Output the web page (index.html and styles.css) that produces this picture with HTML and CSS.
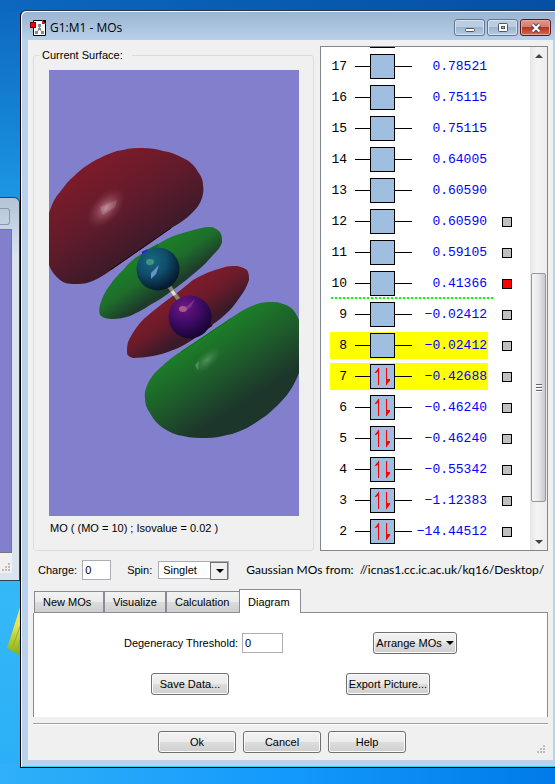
FILE: index.html
```html
<!DOCTYPE html>
<html lang="en">
<head>
    <meta charset="UTF-8">
    <meta name="viewport" content="width=device-width, initial-scale=1.0">
    <title>G1:M1 - MOs</title>
    <link rel="stylesheet" href="styles.css">
</head>
<body>
    <svg class="leaf" width="14" height="52" viewBox="0 0 14 52" aria-hidden="true">
        <defs>
            <linearGradient id="leafFill" x1="0" y1="0" x2="0" y2="1">
                <stop offset="0" stop-color="#f4e04a"/>
                <stop offset="0.4" stop-color="#e8e45a"/>
                <stop offset="1" stop-color="#7fae10"/>
            </linearGradient>
        </defs>
        <path d="M14 0L9 16L4 32L0 44L14 52Z" fill="url(#leafFill)"/>
        <path d="M14 20L6 42M14 32L10 48" stroke="#8cb51c" fill="none"/>
    </svg>

    <div class="back-window">
        <div class="back-button"></div>
        <div class="back-view"></div>
        <div class="back-status">
            <svg class="grip" width="8" height="8" viewBox="0 0 8 8"><path d="M6 0h2v2h-2zM3 3h2v2h-2zM6 3h2v2h-2zM0 6h2v2h-2zM3 6h2v2h-2zM6 6h2v2h-2z"/></svg>
        </div>
    </div>

    <main class="window">
        <header class="titlebar">
            <svg class="app-icon" width="16" height="16" viewBox="0 0 16 16" aria-hidden="true">
                <path d="M3.500 0.500H12L15.500 4V15.500H3.500Z" fill="#fff" stroke="#000"/>
                <path d="M12 0L16 4V0Z" fill="#000"/>
                <path d="M12 1L15 4H12Z" fill="#e00"/>
                <path d="M9.500 5V9L6.500 12.500M9.500 9L12.500 12.500" stroke="#888" fill="none"/>
                <path d="M8 4h3v3h-3zM8 8h3v2h-3zM5 11h3v3h-3zM11 11h3v3h-3z" fill="#888"/>
                <rect x="0.500" y="2.500" width="5" height="5" fill="#f00" stroke="#700"/>
            </svg>
            <h1>G1:M1 - MOs</h1>
            <div class="caption-buttons">
                <button type="button" aria-label="Minimize">
                    <svg width="12" height="10" viewBox="0 0 12 10"><rect x="1.500" y="5.500" width="9" height="3" rx="1" fill="#fff" stroke="#4c5668"/></svg>
                </button>
                <button type="button" aria-label="Maximize">
                    <svg width="12" height="10" viewBox="0 0 12 10"><rect x="1.500" y="0.500" width="9" height="8" rx="1" fill="#fff" stroke="#4c5668"/><rect x="4.500" y="3.500" width="3" height="2" fill="#a9bfd8" stroke="#4c5668"/></svg>
                </button>
                <button type="button" class="close" aria-label="Close">
                    <svg width="12" height="10" viewBox="0 0 12 10"><path d="M2.500 1.500L9.500 8.500M9.500 1.500L2.500 8.500" stroke="#4c4650" stroke-width="4"/><path d="M2.500 1.500L9.500 8.500M9.500 1.500L2.500 8.500" stroke="#fff" stroke-width="2"/></svg>
                </button>
            </div>
        </header>

        <form class="client">
            <div class="top">
                <fieldset class="surface">
                    <legend>Current Surface:</legend>
                    <svg class="view" viewBox="0 0 250 446" role="img" aria-label="Molecular orbital surface">
                        <defs>
                            <linearGradient id="redBig" gradientUnits="userSpaceOnUse" x1="45" y1="95" x2="100" y2="180">
                                <stop offset="0" stop-color="#7b1b2a"/>
                                <stop offset="0.5" stop-color="#601b2b"/>
                                <stop offset="1" stop-color="#391a29"/>
                            </linearGradient>
                            <linearGradient id="greenSmall" gradientUnits="userSpaceOnUse" x1="98" y1="186" x2="122" y2="222">
                                <stop offset="0" stop-color="#1c7c28"/>
                                <stop offset="0.400" stop-color="#1e6e2b"/>
                                <stop offset="0.900" stop-color="#1d3a2b"/>
                            </linearGradient>
                            <linearGradient id="redSmall" gradientUnits="userSpaceOnUse" x1="126" y1="226" x2="150" y2="262">
                                <stop offset="0" stop-color="#7b1b2a"/>
                                <stop offset="0.400" stop-color="#6c1b2a"/>
                                <stop offset="0.900" stop-color="#391a29"/>
                            </linearGradient>
                            <linearGradient id="greenBig" gradientUnits="userSpaceOnUse" x1="145" y1="275" x2="190" y2="345">
                                <stop offset="0" stop-color="#1c7c28"/>
                                <stop offset="0.450" stop-color="#1e5a2b"/>
                                <stop offset="0.900" stop-color="#1d362b"/>
                            </linearGradient>
                            <radialGradient id="shine">
                                <stop offset="0" stop-color="#c896a4" stop-opacity="0.900"/>
                                <stop offset="0.400" stop-color="#b06c7c" stop-opacity="0.500"/>
                                <stop offset="1" stop-color="#903c4c" stop-opacity="0"/>
                            </radialGradient>
                            <radialGradient id="shineGreen">
                                <stop offset="0" stop-color="#5c9c68" stop-opacity="0.800"/>
                                <stop offset="1" stop-color="#3c7c48" stop-opacity="0"/>
                            </radialGradient>
                            <radialGradient id="blueBall" cx="0.350" cy="0.300" r="0.700">
                                <stop offset="0" stop-color="#17687e"/>
                                <stop offset="0.500" stop-color="#104d6c"/>
                                <stop offset="1" stop-color="#051a2e"/>
                            </radialGradient>
                            <radialGradient id="purpleBall" cx="0.350" cy="0.250" r="0.750">
                                <stop offset="0" stop-color="#6d1780"/>
                                <stop offset="0.500" stop-color="#420b68"/>
                                <stop offset="1" stop-color="#160636"/>
                            </radialGradient>
                        </defs>
                        <rect width="250" height="446" fill="#8280cc"/>
                        <path fill="url(#redBig)" d="M0 143C3 134 6 127 11 122C16 115 20 110 24 107C33 98 42 92 51 88C58 84 66 81 74 80C81 78 88 78 94 78C101 78 108 79 114 81C122 82 128 85 134 88C141 91 146 96 149 102C153 107 154 111 154 115C155 120 154 124 153 128C151 134 148 138 143 143C137 149 131 153 124 157L91 180L58 203C52 207 47 210 41 212C36 214 30 214 24 214C19 214 15 213 11 210C6 206 2 201 0 195Z"/>
                        <path d="M122 158L91 179.500L62 199.500" stroke="#2c0010" fill="none"/>
                        <ellipse cx="57" cy="138" rx="24" ry="14" transform="rotate(-48 57 138)" fill="url(#shine)"/>
                        <path d="M51 137L68 130L66 137L54 145Z" fill="#c398a8" opacity="0.300"/>

                        <path fill="url(#greenSmall)" d="M94 183C102 178 110 173 118 169C126 165 133 163 141 161C148 159 155 157 161 157C165 157 168 159 171 162C173 165 173 168 173 172C172 177 168 181 164 185C159 191 154 196 148 201C140 208 132 214 124 220C116 226 109 231 101 235C94 240 87 243 81 246C75 248 69 249 64 249C58 249 54 248 51 245C50 242 50 239 51 235C53 228 56 221 61 215C65 209 69 205 74 200C80 193 86 187 94 183Z"/>
                        <path d="M93 183L99 180" stroke="#1c18f0" stroke-width="2"/>
                        <path d="M98 181L109 175" stroke="#047c08" stroke-width="2"/>
                        <path fill="url(#redSmall)" d="M144 210C154 204 164 200 173 198C178 196 183 196 188 196C192 197 196 198 198 200C200 203 200 206 200 210C198 216 195 222 191 227C188 231 185 236 181 240C175 246 169 251 163 255C156 261 150 266 143 270C137 274 130 278 124 280C117 283 110 285 104 286C97 287 90 288 84 288C80 287 78 285 78 283C78 279 78 276 79 272C82 265 86 259 91 253C96 247 102 243 108 238C114 233 121 228 128 223Z"/>
                        <path d="M142 269L163 255" stroke="#3a000a" stroke-width="2"/>
                        <path fill="url(#greenBig)" d="M208 234C214 232 219 232 224 232C230 232 236 234 241 237C245 240 248 245 250 250V303C247 311 243 318 238 325C232 332 225 339 218 345C211 350 205 354 198 358C191 361 185 364 178 365C171 367 165 368 158 368C150 368 142 368 134 366C127 365 120 362 114 358C108 354 104 349 101 343C97 338 96 333 96 328C95 323 97 318 99 313C102 307 106 302 111 298C118 291 126 285 134 280L164 260L191 242C197 239 202 236 208 234Z"/>
                        <path d="M132 282L182 248.500" stroke="#087c0c"/>
                        <ellipse cx="158" cy="290" rx="18" ry="8" transform="rotate(-42 158 290)" fill="url(#shineGreen)"/>
                        <path d="M146 295L150 291L149 300Z" fill="#7cac88" opacity="0.500"/>

                        <path d="M120 216L130 230" stroke="#8a8270" stroke-width="4"/>
                        <path d="M123 221L126 225" stroke="#e4e4cc" stroke-width="3"/>
                        <circle cx="109" cy="199" r="21.500" fill="url(#blueBall)"/>
                        <ellipse cx="101" cy="192" rx="4" ry="3" fill="#58a880" opacity="0.700"/>
                        <path d="M102 203L110 195L107 204L102 209Z" fill="#7c9cd8" opacity="0.850"/>
                        <circle cx="141" cy="247" r="21.500" fill="url(#purpleBall)"/>
                        <ellipse cx="134" cy="239" rx="4" ry="3" fill="#b0688c" opacity="0.850"/>
                        <path d="M137 237L146 229L142 237L138 240Z" fill="#90489c" opacity="0.600"/>
                    </svg>
                    <p class="caption">MO ( (MO = 10) ; Isovalue = 0.02 )</p>
                </fieldset>

                <div class="orbitals">
                    <ol class="levels" id="levels"></ol>
                    <div class="scrollbar" aria-hidden="true">
                        <div class="scroll-up"></div>
                        <div class="thumb"><span></span></div>
                        <div class="scroll-down"></div>
                    </div>
                </div>
            </div>

            <div class="info">
                <label for="charge">Charge:</label>
                <input type="text" id="charge" value="0">
                <label for="spin">Spin:</label>
                <div class="select-wrap">
                    <select id="spin">
                        <option>Singlet</option>
                        <option>Triplet</option>
                    </select>
                </div>
                <p class="source">Gaussian MOs from:&nbsp; //icnas1.cc.ic.ac.uk/kq16/Desktop/</p>
            </div>

            <div class="tabs" role="tablist">
                <button type="button" role="tab" class="tab-new">New MOs</button>
                <button type="button" role="tab" class="tab-visualize">Visualize</button>
                <button type="button" role="tab" class="tab-calculation">Calculation</button>
                <button type="button" role="tab" class="active" aria-selected="true">Diagram</button>
                <span class="tab-rest"></span>
            </div>
            <div class="panel" role="tabpanel">
                <div class="panel-row">
                    <div class="threshold">
                        <label for="threshold">Degeneracy Threshold:</label>
                        <input type="text" id="threshold" value="0">
                    </div>
                    <button type="button" class="btn arrange">Arrange MOs<span class="arrow"></span></button>
                </div>
                <div class="panel-row">
                    <button type="button" class="btn">Save Data...</button>
                    <button type="button" class="btn export">Export Picture...</button>
                </div>
            </div>

            <footer class="footer">
                <div class="actions">
                    <button type="button" class="btn">Ok</button>
                    <button type="button" class="btn">Cancel</button>
                    <button type="button" class="btn">Help</button>
                </div>
                <svg class="grip" width="8" height="8" viewBox="0 0 8 8"><path d="M6 0h2v2h-2zM3 3h2v2h-2zM6 3h2v2h-2zM0 6h2v2h-2zM3 6h2v2h-2zM6 6h2v2h-2z"/></svg>
            </footer>
        </form>
    </main>

    <script src="script.js"></script>
</body>
</html>
```
FILE: styles.css
```css
* {
    margin: 0;
    padding: 0;
    box-sizing: border-box;
}

body {
    min-height: 100vh;
    display: flow-root;
    position: relative;
    overflow-x: hidden;
    font-family: "Liberation Sans", Arial, sans-serif;
    font-size: 11px;
    line-height: 14px;
    color: #000;
    background:
        linear-gradient(90deg, #0c67be, #0450a4) top / 100% 12px no-repeat,
        linear-gradient(90deg, #30b0f8, #149afc 50%, #007ae8) bottom / 100% 20px no-repeat,
        linear-gradient(180deg, #0c67be, #1685d6 130px, #1c98e4 200px, #35b8f8 600px, #2aaef6);
}

button,
input,
select {
    font: inherit;
    color: inherit;
}

ol {
    list-style: none;
}

/* Desktop behind the window */
.leaf {
    position: absolute;
    left: 7px;
    top: 604px;
}

.back-window {
    position: absolute;
    left: 0;
    top: 197px;
    width: 20px;
    height: 384px;
    padding: 10px 7px 7px 0;
    display: flex;
    flex-direction: column;
    background: linear-gradient(180deg, #b4c4d6, #d9e4f0 60px);
    border: 1px solid #33404c;
    border-left: none;
    border-radius: 0 6px 0 0;
}

.back-button {
    width: 10px;
    height: 17px;
    margin-bottom: 4px;
    border: 1px solid #8797ad;
    border-left: none;
    border-radius: 0 3px 3px 0;
}

.back-view {
    flex: 1;
    background: #8280cc;
    border: 1px solid #777;
    border-left: none;
}

.back-status {
    display: flex;
    align-items: flex-end;
    height: 20px;
    padding: 0 0 2px 2px;
    background: #f0f0f0;
}

/* Window frame */
.window {
    position: relative;
    margin: 10px 0 16px 20px;
    padding: 0 2px 7px 7px;
    background: linear-gradient(180deg, #99b4d1, #b9d1ea 30px);
    border: 1px solid #000;
    border-right: none;
    border-top-color: #2b333c;
    border-radius: 6px 0 0 0;
    box-shadow: inset 1px 1px 0 #eef6fc, inset 0 -1px 0 #35d0ee;
}

.titlebar {
    display: flex;
    align-items: center;
    height: 29px;
    padding: 4px 2px 0;
}

.app-icon {
    margin-right: 4px;
}

.titlebar h1 {
    flex: 1;
    font-family: "Open Sans", "Noto Sans", sans-serif;
    font-size: 12px;
    font-weight: normal;
}

.caption-buttons {
    display: flex;
    gap: 2px;
}

.caption-buttons button {
    display: flex;
    align-items: center;
    justify-content: center;
    width: 31px;
    height: 17px;
    border: 1px solid #63758e;
    border-radius: 3px;
    box-shadow: inset 0 0 0 1px #d5e2f0;
    background: linear-gradient(180deg, #bccde0 50%, #9db5d0 50%, #b4cae2);
}

.caption-buttons .close {
    border-color: #5a1620;
    box-shadow: inset 0 0 0 1px #e6a79c;
    background: linear-gradient(180deg, #dd9a8d, #d07a6b 50%, #b8351d 50%, #cf6a50);
}

.client {
    padding: 6px 5px 7px;
    background: #f0f0f0;
}

/* Surface and energy levels */
.top {
    display: flex;
    align-items: flex-end;
    gap: 6px;
}

.surface {
    flex: 1;
    min-width: 0;
    height: 503px;
    padding: 8px 14px 0 15px;
    border: 1px solid #d5dfe5;
    border-radius: 3px;
}

.surface legend {
    padding: 0 9px 0 2px;
    margin-left: -9px;
}

.view {
    display: block;
    width: 100%;
}

.caption {
    margin-top: 5px;
    padding-left: 1px;
}

.orbitals {
    flex: none;
    display: flex;
    width: 228px;
    height: 505px;
    background: #fff;
    border: 1px solid #828790;
    overflow: hidden;
}

.levels {
    flex: 1;
    display: flex;
    flex-direction: column;
    justify-content: flex-end;
    gap: 4px;
    padding: 0 0 5px 9px;
    font-family: "Liberation Mono", "Courier New", monospace;
    font-size: 13px;
    line-height: 16px;
}

.level {
    flex: none;
    display: flex;
    align-items: center;
    height: 27px;
}

.level-main {
    display: flex;
    align-items: center;
    width: 158px;
    height: 27px;
    padding-right: 1px;
}

.highlight .level-main {
    background: #ff0;
}

.number {
    width: 17px;
    margin-right: 8px;
    text-align: right;
}

.line {
    width: 15px;
    height: 1px;
    background: #000;
}

.line.right {
    width: 17px;
}

.box {
    width: 25px;
    height: 25px;
    background: #a0bfe0;
    border: 1px solid #000;
}

.box svg {
    display: block;
}

.energy {
    flex: 1;
    margin-left: -4px;
    text-align: right;
    color: #00f;
}

.level input {
    appearance: none;
    width: 10px;
    height: 10px;
    margin-left: 14px;
    background: #c0c0c0;
    border: 1px solid #000;
}

.level input:checked {
    background: #f00;
}

.fermi {
    flex: none;
    width: 162px;
    height: 2px;
    margin: -4px 0 -2px 1px;
    background: repeating-linear-gradient(90deg, #0f0 0 2px, #fff 2px 4px);
}

.scrollbar {
    display: flex;
    flex-direction: column;
    width: 17px;
    background: linear-gradient(90deg, #e6e6e6, #f4f4f4 40%, #ededed);
}

.scroll-up,
.scroll-down {
    height: 17px;
    display: flex;
    align-items: center;
    justify-content: center;
}

.scroll-up::before,
.scroll-down::before {
    content: "";
    border: 4px solid transparent;
}

.scroll-up::before {
    border-top: none;
    border-bottom-color: #444;
}

.scroll-down::before {
    border-bottom: none;
    border-top-color: #444;
}

.thumb {
    display: flex;
    align-items: center;
    justify-content: center;
    height: 229px;
    margin: auto 1px 31px;
    border: 1px solid #979797;
    border-radius: 2px;
    background: linear-gradient(90deg, #f5f5f5, #e8e8ea 50%, #c8c8ce);
}

.thumb span {
    width: 6px;
    height: 8px;
    background: repeating-linear-gradient(180deg, #666 0 1px, #fff 1px 2px, transparent 2px 3px);
}

/* Charge and spin */
.info {
    display: flex;
    align-items: center;
    height: 20px;
    margin: 9px 0;
    padding-left: 5px;
}

input[type="text"] {
    height: 20px;
    padding: 0 2px;
    background: #fff;
    border: 1px solid #abadb3;
}

.info input {
    width: 29px;
    margin: 0 16px 0 5px;
}

.select-wrap {
    flex: none;
    display: flex;
    position: relative;
    width: 71px;
    margin: 0 17px 0 6px;
}

.select-wrap::before {
    content: "";
    position: absolute;
    right: 1px;
    top: 1px;
    width: 16px;
    height: 16px;
    background: #f0f0f0;
    border: 1px solid #707070;
    pointer-events: none;
}

.select-wrap::after {
    content: "";
    position: absolute;
    right: 5px;
    top: 8px;
    border: 4px solid transparent;
    border-top-color: #000;
    border-bottom: none;
    pointer-events: none;
}

select {
    appearance: none;
    width: 100%;
    height: 18px;
    padding: 0 18px 0 4px;
    background: #fff;
    border: 1px solid #abadb3;
}

.source {
    white-space: nowrap;
    font-family: Lato, "Open Sans", sans-serif;
    font-size: 12px;
}

/* Tabs */
.tabs {
    display: flex;
    align-items: flex-end;
    height: 24px;
}

.tabs button {
    height: 22px;
    padding-left: 8px;
    text-align: left;
    background: linear-gradient(180deg, #f2f2f2, #ebebeb 50%, #dcdcdc 50%, #cfcfcf);
    border: 1px solid #898c95;
}

.tabs .tab-new {
    width: 70px;
    margin-left: 1px;
}

.tabs .tab-visualize {
    width: 62px;
}

.tabs .tab-calculation {
    width: 73px;
    border-right: none;
}

.tabs .active {
    width: 62px;
    height: 24px;
    background: #fff;
    border-bottom: none;
}

.tab-rest {
    flex: 1;
    border-bottom: 1px solid #898c95;
}

.panel {
    display: flex;
    flex-direction: column;
    gap: 19px;
    padding: 19px 0 22px;
    background: #fff;
    border: 1px solid #898c95;
    border-width: 0 1px;
}

.panel-row {
    display: flex;
    align-items: center;
    justify-content: space-evenly;
}

.threshold {
    display: flex;
    align-items: center;
    gap: 4px;
}

.threshold input {
    width: 41px;
}

.btn {
    width: 78px;
    height: 22px;
    white-space: nowrap;
    background: linear-gradient(180deg, #f2f2f2, #ebebeb 50%, #dddddd 50%, #cfcfcf);
    border: 1px solid #707070;
    border-radius: 3px;
    box-shadow: inset 0 0 0 1px #fbfbfb;
}

.btn.arrange,
.btn.export {
    width: 84px;
}

.arrow {
    display: inline-block;
    margin-left: 4px;
    vertical-align: 2px;
    border: 4px solid transparent;
    border-top-color: #000;
    border-bottom: none;
}

.footer {
    display: flex;
    align-items: flex-end;
    margin-top: 6px;
    padding: 7px 3px 0 0;
    border-top: 1px solid #a0a0a0;
    box-shadow: inset 0 1px 0 #fff;
}

.actions {
    flex: 1;
    display: flex;
    justify-content: center;
    gap: 7px;
    padding-right: 6px;
}

.grip {
    flex: none;
    fill: #bcbcbc;
}
```
FILE: script.js
```js
const levels = [
    { number: 17, energy: '0.78521' },
    { number: 16, energy: '0.75115' },
    { number: 15, energy: '0.75115' },
    { number: 14, energy: '0.64005' },
    { number: 13, energy: '0.60590' },
    { number: 12, energy: '0.60590', box: true },
    { number: 11, energy: '0.59105', box: true },
    { number: 10, energy: '0.41366', box: true, current: true },
    { number: 9, energy: '−0.02412', box: true },
    { number: 8, energy: '−0.02412', box: true, highlight: true },
    { number: 7, energy: '−0.42688', box: true, highlight: true },
    { number: 6, energy: '−0.46240', box: true },
    { number: 5, energy: '−0.46240', box: true },
    { number: 4, energy: '−0.55342', box: true },
    { number: 3, energy: '−1.12383', box: true },
    { number: 2, energy: '−14.44512', box: true },
];

// orbitals up to this one hold an electron pair
const HOMO = 7;

const arrows = `
    <svg width="23" height="23" viewBox="0 0 23 23">
        <path d="M7.5 20V3M15.5 3V20" stroke="#f00" fill="none"/>
        <path d="M8 2.5V6L5 8H3.5ZM15 20.5V14H19V15.5Z" fill="#f00"/>
    </svg>`;

const list = document.getElementById('levels');

// the next level up is cut off by the top of the list
let html = `
    <li class="level"><div class="level-main">
        <span class="number"></span><span class="line"></span><span class="box"></span>
    </div></li>`;

levels.forEach((level) => {
    const tick = level.box
        ? `<input type="checkbox" aria-label="MO ${level.number}" ${level.current ? 'checked' : ''}>`
        : '';
    html += `
        <li class="level ${level.highlight ? 'highlight' : ''}">
            <div class="level-main">
                <span class="number">${level.number}</span>
                <span class="line"></span>
                <span class="box">${level.number <= HOMO ? arrows : ''}</span>
                <span class="line right"></span>
                <span class="energy">${level.energy}</span>
            </div>
            ${tick}
        </li>`;
    if (level.current) {
        html += '<li class="fermi" aria-hidden="true"></li>';
    }
});

list.innerHTML = html;
```
